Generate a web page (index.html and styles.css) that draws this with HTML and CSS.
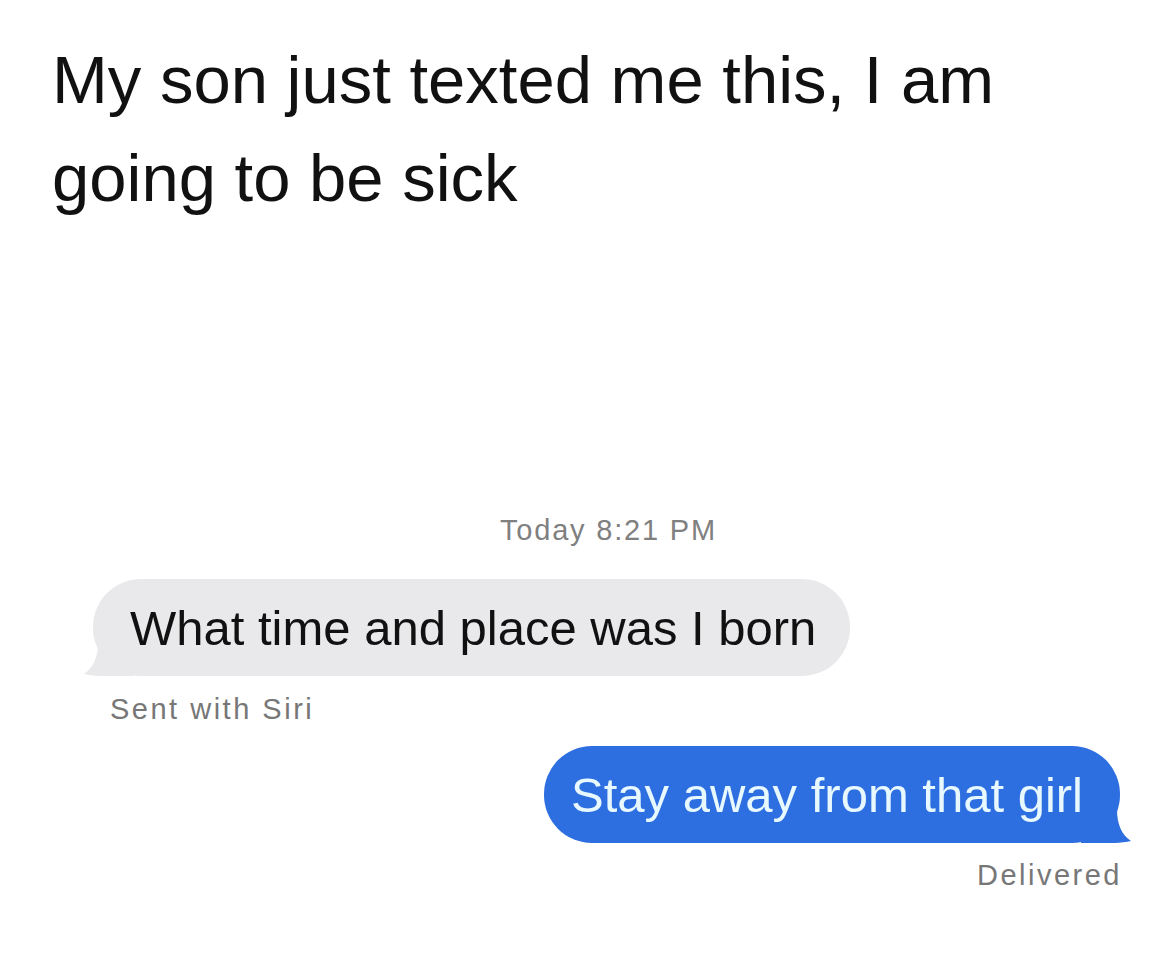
FILE: index.html
```html
<!DOCTYPE html>
<html>
<head>
<meta charset="utf-8">
<link rel="stylesheet" href="styles.css">
</head>
<body>
<main class="page">
  <h1 class="title">My son just texted me this, I am going to be sick</h1>
  <section class="chat">
    <div class="stamp">Today 8:21 PM</div>
    <div class="row row-in">
      <div class="bubble bubble-in">What time and place was I born<svg class="tail tail-in" width="50" height="34" viewBox="0 0 50 34"><path d="M14 0 C14 16 9 26 0 32 C12 35 28 34 50 34 L50 0 Z" fill="#e9e9eb"/></svg></div>
    </div>
    <div class="note note-in">Sent with Siri</div>
    <div class="row row-out">
      <div class="bubble bubble-out">Stay away from that girl<svg class="tail tail-out" width="50" height="34" viewBox="0 0 50 34"><path d="M14 0 C14 16 9 26 0 32 C12 35 28 34 50 34 L50 0 Z" fill="#2d6fe0"/></svg></div>
    </div>
    <div class="note note-out">Delivered</div>
  </section>
</main>
</body>
</html>
```

FILE: styles.css
```css
html, body {
  margin: 0;
  padding: 0;
  background: #ffffff;
}
.page {
  width: 1170px;
  height: 963px;
  box-sizing: border-box;
  padding: 31px 0 0 52px;
  font-family: "Liberation Sans", Arial, sans-serif;
}
.title {
  margin: 0;
  width: 1000px;
  font-size: 67px;
  font-weight: 400;
  line-height: 98px;
  color: #111111;
}
.chat {
  margin-top: 286px;
  padding-right: 50px;
  display: flex;
  flex-direction: column;
}
.stamp {
  align-self: flex-start;
  margin-left: 448px;
  font-size: 29px;
  line-height: 34px;
  letter-spacing: 1.8px;
  color: #808080;
}
.row {
  display: flex;
}
.row-in {
  margin-top: 32px;
  padding-left: 41px;
}
.row-out {
  justify-content: flex-end;
  margin-top: 20px;
}
.bubble {
  position: relative;
  height: 97px;
  box-sizing: border-box;
  border-radius: 48px;
  display: flex;
  align-items: center;
  font-size: 49px;
  white-space: nowrap;
}
.bubble-in {
  background: #e9e9eb;
  color: #111111;
  padding: 0 34px 0 37px;
}
.bubble-out {
  background: #2d6fe0;
  color: #e8f8ff;
  padding: 0 37px 0 27px;
}
.tail {
  position: absolute;
  bottom: 0;
}
.tail-in {
  left: -9px;
}
.tail-out {
  right: -11px;
  transform: scaleX(-1);
}
.note {
  font-size: 29px;
  line-height: 34px;
  letter-spacing: 2.5px;
  color: #777777;
}
.note-in {
  margin-top: 16px;
  padding-left: 58px;
}
.note-out {
  align-self: flex-end;
  margin-top: 15px;
  margin-right: -2px;
}
```
